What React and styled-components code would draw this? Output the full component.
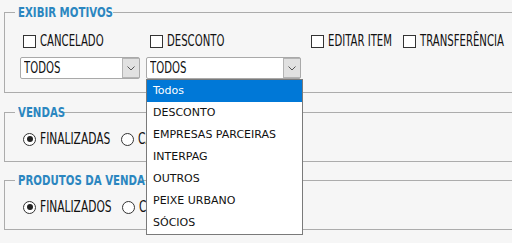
import styled, { createGlobalStyle } from "styled-components";

const GlobalStyle = createGlobalStyle`
  html, body {
    margin: 0;
    padding: 0;
    background: #f6f6f6;
  }
  body {
    font-family: "Liberation Sans Narrow", "DejaVu Sans Condensed", sans-serif;
    color: #111;
  }
`;

const Page = styled.div`
  width: 512px;
  height: 243px;
  overflow: hidden;
  padding: 0 0 0 4px;
  box-sizing: border-box;
`;

const Group = styled.fieldset`
  margin: ${(p) => p.$top}px -30px 0 0;
  padding: ${(p) => p.$pt}px 0 ${(p) => p.$pb}px 15px;
  border: 1px solid #acacac;
  min-width: 0;
`;

const Legend = styled.legend`
  margin-left: -5px;
  padding: 0 2px 0 3px;
  width: ${(p) => p.$w}px;
  font-size: 14px;
  line-height: 14px;
  font-weight: bold;
  color: #2b86c0;
  white-space: nowrap;
`;

/* narrow text: the screenshot uses a condensed face we don't have */
const Narrow = styled.span`
  display: inline-block;
  white-space: nowrap;
  transform: scaleX(${(p) => p.$scale || 0.75});
  transform-origin: 0 50%;
`;

const Columns = styled.div`
  display: flex;
  align-items: flex-start;
`;

const Column = styled.div`
  width: ${(p) => (p.$width ? `${p.$width}px` : "auto")};
  flex: none;
  display: flex;
  flex-direction: column;
  gap: 9px;
`;

const Check = styled.label`
  display: flex;
  align-items: center;
  gap: 4px;
  height: 14px;
  width: ${(p) => (p.$width ? `${p.$width}px` : "auto")};
  flex: none;
  margin-left: ${(p) => p.$indent || 0}px;
  font-size: 15px;
  white-space: nowrap;
`;

const Box = styled.span`
  width: 11px;
  height: 11px;
  border: 1px solid #333;
  background: #fff;
  flex: none;
`;

const Round = styled.span`
  width: 11px;
  height: 11px;
  border: 1px solid #333;
  border-radius: 50%;
  background: #fff;
  flex: none;
  display: flex;
  align-items: center;
  justify-content: center;
  &::after {
    content: "";
    width: 6px;
    height: 6px;
    border-radius: 50%;
    background: ${(p) => (p.$on ? "#222" : "transparent")};
  }
`;

const Radios = styled.div`
  display: flex;
  align-items: center;
  padding-left: 3px;
`;

const SelectWrap = styled.div`
  position: relative;
  width: ${(p) => p.$width}px;
`;

const Select = styled.div`
  height: 20px;
  border: 1px solid #a9a9a9;
  border-radius: 2px;
  background: #fff;
  display: flex;
  align-items: center;
  padding-left: 3px;
  font-size: 15px;
`;

const Value = styled.span`
  flex: 1;
  overflow: hidden;
`;

const Arrow = styled.span`
  width: 17px;
  height: 20px;
  box-sizing: border-box;
  border: 1px solid #b4b4b4;
  border-right: none;
  background: #e1e1e1;
  display: flex;
  align-items: center;
  justify-content: center;
`;

const List = styled.ul`
  position: absolute;
  top: 100%;
  left: 0;
  width: 155px;
  margin: 0;
  padding: 0;
  list-style: none;
  background: #fff;
  border: 1px solid #7a7a7a;
  z-index: 10;
  font-family: "DejaVu Sans", sans-serif;
  font-size: 11px;
`;

const Item = styled.li`
  height: 22px;
  line-height: 22px;
  padding-left: 6px;
  color: ${(p) => (p.$active ? "#fff" : "#111")};
  background: ${(p) => (p.$active ? "#0078d7" : "transparent")};
`;

const Chevron = () => (
  <svg width="8" height="5" viewBox="0 0 8 5">
    <polyline points="0.5,0.5 4,4 7.5,0.5" fill="none" stroke="#555" strokeWidth="1" />
  </svg>
);

const motivos = [
  "Todos",
  "DESCONTO",
  "EMPRESAS PARCEIRAS",
  "INTERPAG",
  "OUTROS",
  "PEIXE URBANO",
  "SÓCIOS",
];

const Dropdown = ({ width, open }) => (
  <SelectWrap $width={width}>
    <Select>
      <Value>
        <Narrow>TODOS</Narrow>
      </Value>
      <Arrow>
        <Chevron />
      </Arrow>
    </Select>
    {open && (
      <List>
        {motivos.map((m, i) => (
          <Item key={m} $active={i === 0}>
            {m}
          </Item>
        ))}
      </List>
    )}
  </SelectWrap>
);

const CheckBox = ({ indent, children }) => (
  <Check $indent={indent}>
    <Box />
    <Narrow>{children}</Narrow>
  </Check>
);

const Radio = ({ on, width, children }) => (
  <Check $width={width}>
    <Round $on={on} />
    <Narrow $scale={0.79}>{children}</Narrow>
  </Check>
);

const App = () => (
  <>
    <GlobalStyle />
    <Page>
      <Group $top={5} $pt={15} $pb={13}>
        <Legend $w={93}>
          <Narrow $scale={0.81}>EXIBIR MOTIVOS</Narrow>
        </Legend>
        <Columns>
          <Column $width={126}>
            <CheckBox indent={3}>CANCELADO</CheckBox>
            <Dropdown width={120} />
          </Column>
          <Column $width={165}>
            <CheckBox indent={4}>DESCONTO</CheckBox>
            <Dropdown width={155} open />
          </Column>
          <Column $width={92}>
            <CheckBox>EDITAR ITEM</CheckBox>
          </Column>
          <Column>
            <CheckBox>TRANSFERÊNCIA</CheckBox>
          </Column>
        </Columns>
      </Group>
      <Group $top={12} $pt={13} $pb={15}>
        <Legend $w={44}>
          <Narrow $scale={0.81}>VENDAS</Narrow>
        </Legend>
        <Radios>
          <Radio on width={98}>FINALIZADAS</Radio>
          <Radio>CANCELADAS</Radio>
        </Radios>
      </Group>
      <Group $top={11} $pt={13} $pb={15}>
        <Legend $w={120}>
          <Narrow $scale={0.81}>PRODUTOS DA VENDA</Narrow>
        </Legend>
        <Radios>
          <Radio on width={99}>FINALIZADOS</Radio>
          <Radio>CANCELADOS</Radio>
        </Radios>
      </Group>
    </Page>
  </>
);

export default App;
